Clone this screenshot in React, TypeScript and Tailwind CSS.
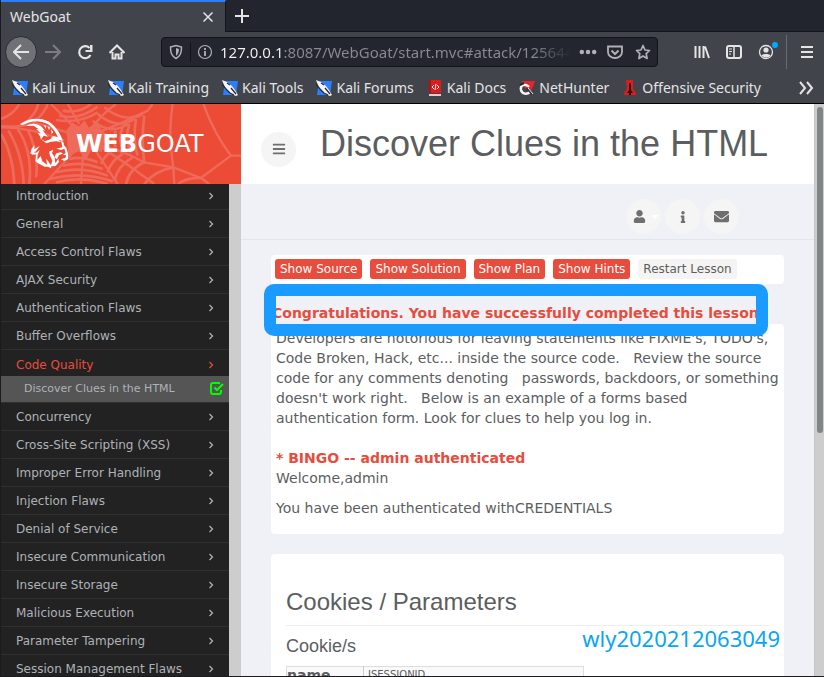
import type { ReactNode } from "react";
import { FaBars, FaEnvelope, FaInfo, FaUser } from "react-icons/fa";

const menuTop = [
  "General",
  "Access Control Flaws",
  "AJAX Security",
  "Authentication Flaws",
  "Buffer Overflows",
];

const menuBottom = [
  "Concurrency",
  "Cross-Site Scripting (XSS)",
  "Improper Error Handling",
  "Injection Flaws",
  "Denial of Service",
  "Insecure Communication",
  "Insecure Storage",
  "Malicious Execution",
  "Parameter Tampering",
  "Session Management Flaws",
];

const lessonActions = ["Show Source", "Show Solution", "Show Plan", "Show Hints"];

function KaliMark() {
  return (
    <svg viewBox="0 0 16 16" className="size-4 shrink-0" aria-hidden="true">
      <path d="M3 1h13l-2 14H1z" fill="#2a7fff" />
      <path d="M0 0l5 2 5 4 3 4 3 5-2 1-5-2-4-4-3-5z" fill="#f4f4f4" />
      <path d="M0 4l4 5 4 4 4 2M9 8l5 6M5 3l3 2" stroke="#26282e" strokeWidth="1.200" fill="none" />
    </svg>
  );
}

function DocsMark() {
  return (
    <svg viewBox="0 0 16 16" className="size-4 shrink-0" aria-hidden="true">
      <path d="M2 0h12v13H2z" fill="#e01b1b" />
      <path d="M2 14h12v2H2z" fill="#e9c9c9" />
      <path d="M2 0h2v13H2z" fill="#b50f12" />
      <path d="M7 5L5 7l2 2M10 5l2 2-2 2M9 4L8 10" stroke="#fff" fill="none" />
    </svg>
  );
}

function NetHunterMark() {
  return (
    <svg viewBox="0 0 16 16" className="size-4 shrink-0" aria-hidden="true">
      <path d="M3 1h13l-2 6-3 5-8-7z" fill="#e3262b" />
      <path d="M10 7C6 3 1 5 2 10c1 4 6 5 9 2" stroke="#f4f4f4" strokeWidth="2.500" fill="none" />
      <path d="M8 8l5 6M1 5l4-2" stroke="#26282e" strokeWidth="2" />
      <path d="M9 8l5 6" stroke="#f4f4f4" strokeWidth="1" />
    </svg>
  );
}

function OffensiveMark() {
  return (
    <svg viewBox="0 0 16 16" className="size-4 shrink-0" aria-hidden="true">
      <path d="M4 0h7v9l3 4v2H2v-2l3-4z" fill="#e5191d" />
      <path d="M7 3h2v7l2 3H9v2H7v-2H5l2-3z" fill="#2a0a0c" />
    </svg>
  );
}

const bookmarks: { label: string; icon: ReactNode }[] = [
  { label: "Kali Linux", icon: <KaliMark /> },
  { label: "Kali Training", icon: <KaliMark /> },
  { label: "Kali Tools", icon: <KaliMark /> },
  { label: "Kali Forums", icon: <KaliMark /> },
  { label: "Kali Docs", icon: <DocsMark /> },
  { label: "NetHunter", icon: <NetHunterMark /> },
  { label: "Offensive Security", icon: <OffensiveMark /> },
];

function Line({ children, className = "size-4" }: { children: ReactNode; className?: string }) {
  return (
    <svg
      viewBox="0 0 16 16"
      className={className}
      fill="none"
      stroke="currentColor"
      strokeWidth="2"
      aria-hidden="true"
    >
      {children}
    </svg>
  );
}

function TabStrip() {
  return (
    <div className="flex h-8 bg-[#23252e]">
      <div className="flex w-[225px] items-center justify-between border-t-2 border-r border-t-[#2a7fff] border-r-[#15161b] bg-[#42444b] pr-[11px] pl-[9px]">
        <span>WebGoat</span>
        <button aria-label="Close tab">
          <Line className="size-3">
            <path d="M2 2l12 12M14 2L2 14" />
          </Line>
        </button>
      </div>
      <div className="flex grow items-center border-b border-[#15161b] pl-2">
        <button aria-label="New tab">
          <Line>
            <path d="M8 1v14M1 8h14" />
          </Line>
        </button>
      </div>
    </div>
  );
}

function NavBar() {
  return (
    <div className="flex h-10 items-center bg-[#42444b] pl-1">
      <button
        aria-label="Back"
        className="flex size-8 items-center justify-center rounded-full border border-[#2b2c31] bg-[#707176]"
      >
        <Line>
          <path d="M16 8H1M8 1L1 8l7 7" />
        </Line>
      </button>
      <button aria-label="Forward" className="ml-1 p-1 text-[#7c7d82]">
        <Line>
          <path d="M0 8h15M8 1l7 7-7 7" />
        </Line>
      </button>
      <button aria-label="Reload" className="ml-2 p-1">
        <Line>
          <path d="M12.500 4A6 6 0 1 0 13.500 11" strokeWidth="2.200" />
          <path d="M15.500 1v7H8.500V6H13V1z" fill="currentColor" stroke="none" />
        </Line>
      </button>
      <button aria-label="Home" className="ml-2 p-1">
        <Line>
          <path d="M0.500 9L8 1.500 15.500 9M3.500 8v6.500h3v-4h3v4h3V8" />
        </Line>
      </button>
      <div className="ml-8 flex h-[30px] min-w-0 flex-[0_1_497px] items-center rounded border border-[#121318] bg-[#23252f] pr-1.5 text-[#b1b1b5]">
        <button aria-label="Tracking protection" className="px-1.5">
          <Line>
            <path d="M2.500 3L8 1.500 13.500 3c0 6-1 9-5.500 11.500C3.500 12 2.500 9 2.500 3z" strokeWidth="1.500" />
            <path d="M8 4v8c2-2 3-4 3-7z" fill="currentColor" stroke="none" />
          </Line>
        </button>
        <div className="h-5 w-px bg-[#121318]" />
        <button aria-label="Site information" className="px-1.5">
          <Line>
            <circle cx="8" cy="8" r="6.500" strokeWidth="1.200" />
            <path d="M8 7v5M8 4v2" strokeWidth="1.800" />
          </Line>
        </button>
        <input
          aria-label="Address"
          readOnly
          value="127.0.0.1:8087/WebGoat/start.mvc#attack/125644"
          className="min-w-0 grow bg-[linear-gradient(90deg,#f4f4f5_65px,#8a8b90_65px,#8a8b90_calc(100%-40px),transparent_calc(100%-2px))] bg-clip-text pl-px text-[15px] text-transparent outline-none"
        />
        <button aria-label="Page actions" className="px-1.5">
          <Line className="size-[18px]">
            <path
              d="M2.500 6a2 2 0 1 0 .01 4 2 2 0 0 0 0-4zM8 6a2 2 0 1 0 .01 4A2 2 0 0 0 8 6zM13.500 6a2 2 0 1 0 .01 4 2 2 0 0 0 0-4z"
              fill="currentColor"
              stroke="none"
            />
          </Line>
        </button>
        <button aria-label="Save to Pocket" className="px-1">
          <Line>
            <path d="M1 2.500h14V8A7 6 0 0 1 1 8z" strokeWidth="1.800" />
            <path d="M4.500 6.500L8 10l3.500-3.500" />
          </Line>
        </button>
        <button aria-label="Bookmark this page" className="pl-2">
          <Line>
            <path
              d="M8 1.500l2 4.500 4.500.500-3.300 3.200.9 4.800L8 12l-4.100 2.500.9-4.800L1.500 6.500 6 6z"
              strokeWidth="1.700"
              strokeLinejoin="round"
            />
          </Line>
        </button>
      </div>
      <div className="ml-auto flex shrink-0 items-center">
        <button aria-label="Library" className="px-2">
          <Line>
            <path d="M1.500 2v12M5.500 2v12M9.500 2v12M11 2.500l4 11.500" />
          </Line>
        </button>
        <button aria-label="Sidebars" className="px-2">
          <Line>
            <rect x="1" y="2" width="14" height="12" rx="2" />
            <path d="M8 2v12" strokeWidth="1.500" />
            <path d="M3 5h3M3 7.500h3M3 10h2" strokeWidth="1" />
          </Line>
        </button>
        <button aria-label="Account" className="relative px-2">
          <Line>
            <circle cx="8" cy="8" r="6.500" strokeWidth="1.300" />
            <circle cx="8" cy="6" r="2.600" fill="currentColor" stroke="none" />
            <path d="M3.500 11.500c1-2 8-2 9 0C11 14 5 14 3.500 11.500z" fill="currentColor" stroke="none" />
          </Line>
          <span className="absolute -top-0.5 right-1 size-1.5 rounded-full bg-[#00a8ff]" />
        </button>
        <div className="ml-1 h-[34px] w-px bg-[#6b6c71]" />
        <button aria-label="Open menu" className="pr-[9px] pl-3">
          <Line>
            <path d="M2 3h12M2 8h12M2 13h12" />
          </Line>
        </button>
      </div>
    </div>
  );
}

function BookmarkBar() {
  return (
    <div className="flex h-8 items-center gap-[13px] overflow-hidden border-b border-black bg-[#42444b] pr-2.5 pl-[11px]">
      {bookmarks.map(({ label, icon }) => (
        <a key={label} href="#" className="flex shrink-0 items-center gap-1 whitespace-nowrap">
          {icon}
          {label}
        </a>
      ))}
      <button aria-label="More bookmarks" className="ml-auto">
        <Line>
          <path d="M2 2l5 6-5 6M9 2l5 6-5 6" />
        </Line>
      </button>
    </div>
  );
}

function WebPattern() {
  return (
    <svg
      viewBox="0 0 720 240"
      preserveAspectRatio="xMinYMin slice"
      className="absolute inset-0 size-full"
      fill="none"
      stroke="#ee6a5b"
      strokeWidth="7"
      aria-hidden="true"
    >
      <path
        d="M200 80L215 60 235 72 250 55 262 75 290 62 300 85 320 95 305 118 300 140 270 132 255 160 235 138 205 150z"
        fill="#ee6a5b"
      />
      <path d="M0 66Q60 72 100 56L250 100M200 0L235 60M150 0L220 70M250 100Q300 30 345 0M250 100Q340 70 440 20L455 0M270 120Q350 130 430 175L517 190L600 222L690 155L720 155M690 155Q640 90 607 0M515 0Q500 90 517 190M517 190L520 240M250 100L240 240M240 120L130 240M270 120L350 240M0 70Q90 70 190 110M300 130Q380 180 460 240" />
      <path
        strokeWidth="8"
        d="M0 90Q36 150 40 240M22 80Q65 150 68 240M50 76Q95 140 85 240M80 76Q115 150 105 220M100 56Q135 20 140 0M70 60Q105 30 112 0M0 45Q40 30 55 0M165 48Q235 60 290 25M175 35Q235 50 290 8M185 20Q235 30 270 0M310 10Q370 60 425 30M290 30Q350 80 400 45M275 50Q330 95 380 60M345 80Q330 110 345 130M365 70Q350 105 365 135M385 60Q370 105 390 145M405 45Q395 110 410 155M430 35Q420 110 430 175M335 140Q310 155 300 180M365 150Q330 170 320 205M395 160Q350 185 340 230M430 175Q385 195 375 240M205 165Q240 155 290 175M185 185Q240 170 305 195M165 205Q240 185 320 215M145 225Q240 200 335 232M165 235Q240 215 320 240M517 190Q460 200 430 240M600 222Q560 220 530 240M600 222L625 240"
      />
      <g fill="#fff" stroke="none">
        <path d="M56 61C80 44 100 42 124 46C150 51 172 74 185 109L172 103C166 85 152 66 138 59C116 48 90 49 66 63Z" />
        <path d="M75 66C92 56 108 58 122 68L133 82L124 77L135 92L142 98L128 95L120 107L117 96L110 88L120 88L106 76L112 75L98 65Z" />
        <path d="M128 62l6 12 2-9zM140 66l4 13 3-8zM150 76l2 14 5-6z" />
        <path d="M120 106L132 112L148 106L156 96L178 101L186 110L172 108L182 115L166 112L150 113L136 118Z" />
        <path d="M180 108L188 116L189 124L196 131L202 152L201 165L190 171L180 166L194 161L195 154L186 152L194 147L190 134L180 138L166 134L184 130Z" />
        <path d="M88 148L92 134L100 124L100 136L116 126L106 140L98 146L106 146L116 138L110 152L109 168L119 156L124 172L138 182L136 164L150 184L154 170L147 155L144 143L157 137L153 147L161 160L163 178L172 164L174 174L164 186L151 187L150 193L141 188L131 188L111 178L103 172L106 151L94 152Z" />
        <path d="M160 160L166 148L180 145L186 149L174 153L168 166Z" />
      </g>
    </svg>
  );
}

function MenuRow({
  label,
  active = false,
  className = "h-7 border-b",
}: {
  label: string;
  active?: boolean;
  className?: string;
}) {
  return (
    <li className={`shrink-0 border-[#303030] ${className}`}>
      <a
        href="#"
        className={`flex h-full items-center justify-between pr-3.5 pl-[15px] ${
          active ? "text-[#e74c3c]" : "text-[#aeb2b7]"
        }`}
      >
        {label}
        <Line className="size-2">
          <path d="M5 2l6 6-6 6" strokeWidth="2.500" />
        </Line>
      </a>
    </li>
  );
}

function Sidebar() {
  return (
    <aside className="flex w-[240px] shrink-0 flex-col">
      <div className="relative flex h-20 shrink-0 items-center overflow-hidden bg-[#ec4b36] pl-[75px]">
        <WebPattern />
        <a href="#" className="relative text-[24px] leading-7 text-white">
          <b>WEB</b>GOAT
        </a>
      </div>
      <div className="flex min-h-0 grow bg-[#cdcdcd] pr-3">
        <ul className="flex grow flex-col overflow-hidden bg-[#222] text-[12px] leading-4">
          <MenuRow label="Introduction" className="h-[26px] border-b pb-0.5" />
          {menuTop.map((label) => (
            <MenuRow key={label} label={label} />
          ))}
          <MenuRow label="Code Quality" active className="h-[26px] pt-1" />
          <li className="h-[27px] shrink-0 border-b border-[#303030] bg-[#555]">
            <a
              href="#"
              className="flex h-full items-center justify-between pr-[5px] pl-[23px] text-[11px] text-[#aeb2b7]"
            >
              Discover Clues in the HTML
              <svg
                viewBox="0 0 14 14"
                className="size-3.5 text-[#00ff00]"
                fill="none"
                stroke="currentColor"
                strokeWidth="2"
                role="img"
                aria-label="Completed"
              >
                <path d="M10 1H3a2 2 0 0 0-2 2v7a2 2 0 0 0 2 2h6a2 2 0 0 0 2-2V8" />
                <path d="M4.500 5.500L7 8l6-6" strokeWidth="2.200" />
              </svg>
            </a>
          </li>
          {menuBottom.map((label) => (
            <MenuRow key={label} label={label} />
          ))}
        </ul>
      </div>
    </aside>
  );
}

function RoundButton({ label, children }: { label: string; children: ReactNode }) {
  return (
    <button
      aria-label={label}
      className="flex size-[35px] shrink-0 items-center justify-center rounded-full bg-[#f5f5f5] text-[#6f6f6f]"
    >
      {children}
    </button>
  );
}

function LessonPage() {
  return (
    <main className="flex min-w-0 grow flex-col overflow-hidden bg-[#f0f1f7]">
      <header className="flex h-20 shrink-0 items-center gap-6 bg-white pl-5">
        <div className="pt-2.5">
          <RoundButton label="Toggle menu">
            <FaBars className="size-3.5" />
          </RoundButton>
        </div>
        <h1 className="font-['Liberation_Sans',Arial,sans-serif] text-[36px] leading-10 whitespace-nowrap">
          Discover Clues in the HTML
        </h1>
      </header>

      <div className="flex h-14 shrink-0 items-center justify-end gap-1 border-b border-[#e4e5ea] pt-2.5 pr-[75px]">
        <div className="relative">
          <RoundButton label="User menu">
            <FaUser className="mr-2 size-[13px]" />
          </RoundButton>
          <span className="absolute top-4 right-0.5 border-x-4 border-t-4 border-x-transparent border-t-white" />
        </div>
        <RoundButton label="About">
          <FaInfo className="size-3" />
        </RoundButton>
        <RoundButton label="Contact">
          <FaEnvelope className="size-[15px]" />
        </RoundButton>
      </div>

      <div className="flex flex-col px-[30px] pt-[15px]">
        <div className="flex h-[29px] shrink-0 items-start gap-2 rounded bg-white px-1 pt-1 text-[12px] leading-5">
          {lessonActions.map((label) => (
            <button key={label} className="rounded-[3px] bg-[#e74c3c] px-[5px] text-white">
              {label}
            </button>
          ))}
          <button className="rounded-[3px] bg-[#f5f4f3] px-[5px]">Restart Lesson</button>
        </div>

        <div className="relative flex h-10 shrink-0 items-end pb-px">
          <p className="pl-px leading-5 font-bold whitespace-nowrap text-[#e74c3c]">
            Congratulations. You have successfully completed this lesson.
          </p>
          <div className="absolute top-0 right-4 -bottom-3 -left-[7px] overflow-hidden rounded-[10px]">
            <div className="size-full border-12 border-[#1a9bff]" />
          </div>
        </div>

        <section className="shrink-0 rounded bg-white px-[5px] pt-1 pb-4 leading-5">
          <p>
            Developers are notorious for leaving statements like FIXME's, TODO's, Code Broken, Hack,
            etc... inside the source code. &nbsp; Review the source code for any comments denoting
            &nbsp; passwords, backdoors, or something doesn't work right. &nbsp; Below is an example
            of a forms based authentication form. Look for clues to help you log in.
          </p>
          <p className="mt-5 font-bold text-[#e74c3c]">* BINGO -- admin authenticated</p>
          <p>Welcome,admin</p>
          <p className="mt-2.5">You have been authenticated withCREDENTIALS</p>
        </section>

        <section className="relative mt-5 shrink-0 rounded bg-white px-[15px] pt-8 pb-8">
          <h2 className="border-b border-[#eee] pb-[7px] font-['Liberation_Sans',Arial,sans-serif] text-[24px] leading-8">
            Cookies / Parameters
          </h2>
          <h3 className="mt-2.5 font-['Liberation_Sans',Arial,sans-serif] text-[18px] leading-5">
            Cookie/s
          </h3>
          <table className="mt-2.5 w-[298px] border border-[#ddd] bg-[#f9f9f9]">
            <tbody>
              <tr>
                <th className="w-[77px] border-r border-[#ccc] text-left leading-4" scope="row">
                  name
                </th>
                <td className="pl-1 text-[10px] leading-4">JSESSIONID</td>
              </tr>
            </tbody>
          </table>
          <p className="absolute top-[68px] right-1 font-['Noto_Sans',sans-serif] text-[22px] leading-8 text-[#0aa5f5]">
            wly2020212063049
          </p>
        </section>
      </div>
    </main>
  );
}

export default function App() {
  return (
    <div className="flex h-screen flex-col overflow-hidden border-b border-l border-[#1b1b1f] bg-[#42444b]">
      <div className="shrink-0 font-['Noto_Sans',sans-serif] text-[14px] leading-5 text-[#e4e4e5]">
        <TabStrip />
        <NavBar />
        <BookmarkBar />
      </div>
      <div className="flex min-h-0 grow font-['DejaVu_Sans',Verdana,sans-serif] text-[14px] text-[#5b5e60]">
        <Sidebar />
        <LessonPage />
        <div className="flex w-2.5 shrink-0 justify-center border-l border-[#c4c4c4] bg-[#cdcdcd] pt-[3px]">
          <div className="h-[326px] w-1.5 rounded-full bg-[#808585]" />
        </div>
      </div>
    </div>
  );
}
